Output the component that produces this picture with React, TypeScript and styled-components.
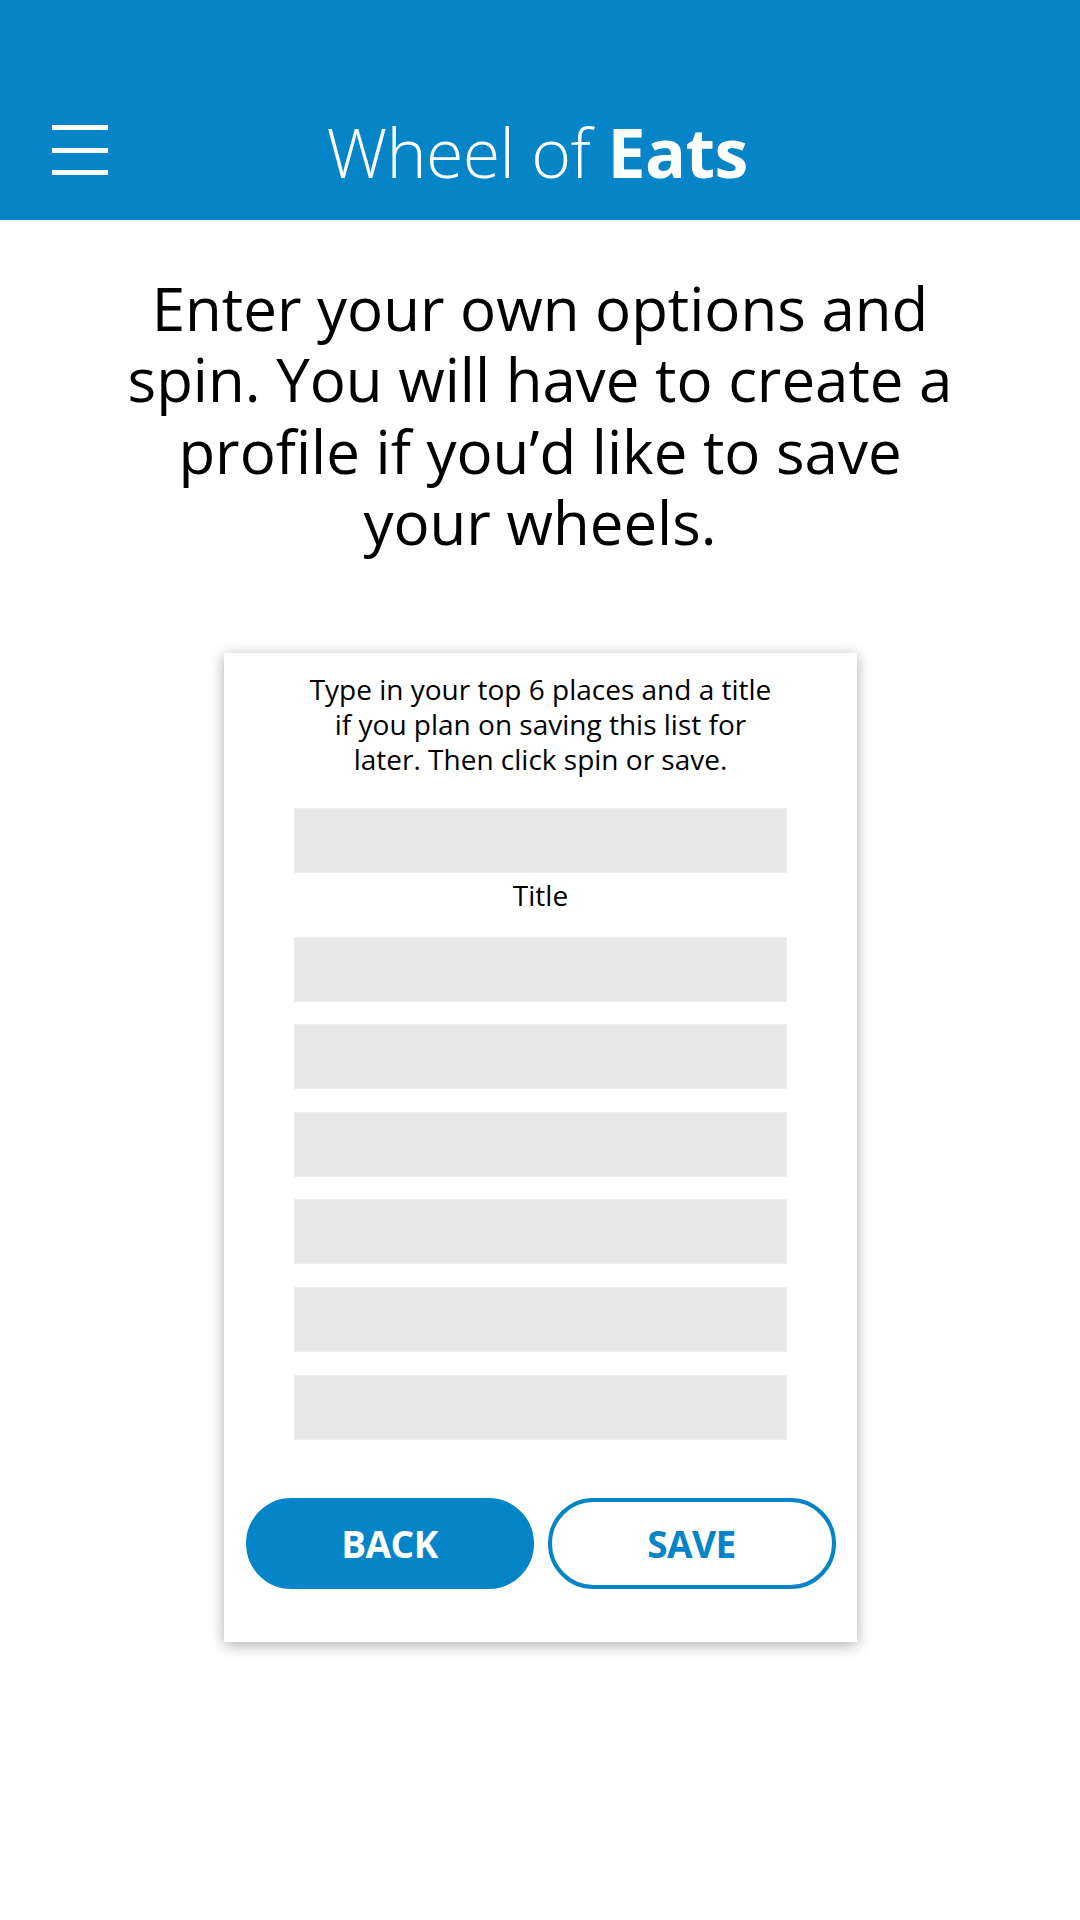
import React from "react";
import styled, { createGlobalStyle } from "styled-components";

const Global = createGlobalStyle`
  html, body { margin: 0; padding: 0; background: #fff; }
  body { font-family: "Open Sans", "Noto Sans", sans-serif; color: #000; }
  * { box-sizing: border-box; }
`;

const Page = styled.div`
  width: 1080px;
  min-height: 1920px;
  background: #fff;
  display: flex;
  flex-direction: column;
  align-items: center;
`;

const Header = styled.header`
  width: 100%;
  height: 220px;
  background: #0584c8;
  display: grid;
  grid-template-columns: 160px 1fr 160px;
  align-items: end;
`;

const MenuButton = styled.button`
  justify-self: start;
  margin: 0 0 45px 52px;
  width: 56px;
  height: 50px;
  padding: 0;
  border: none;
  background: transparent;
  display: flex;
  flex-direction: column;
  justify-content: space-between;
`;

const MenuBar = styled.span`
  display: block;
  width: 56px;
  height: 5px;
  background: #fff;
`;

const Brand = styled.h1`
  margin: 0 6px 34px 0;
  text-align: center;
  color: #fff;
  font-size: 68px;
  line-height: 68px;
  font-weight: 300;
  letter-spacing: -0.6px;
`;

const BrandBold = styled.span`
  font-weight: 700;
`;

const Intro = styled.p`
  margin: 53px 0 0;
  width: 845px;
  text-align: center;
  font-size: 60px;
  line-height: 71.4px;
  font-weight: 400;
`;

const Card = styled.section`
  margin-top: 94px;
  width: 633px;
  background: #fff;
  box-shadow: 0 3px 14px rgba(0, 0, 0, 0.33);
  padding: 19px 21px 53px 22px;
  display: flex;
  flex-direction: column;
  align-items: center;
`;

const Instructions = styled.p`
  margin: 0;
  width: 474px;
  text-align: center;
  font-size: 28px;
  line-height: 35px;
`;

const Field = styled.input<{ $gap: number }>`
  width: 493px;
  height: 65px;
  background: #e8e8e8;
  border: 1px solid #eeeeee;
  outline: none;
  margin-top: ${(p) => p.$gap}px;
  font-family: inherit;
  font-size: 28px;
  padding: 0 12px;
`;

const FieldLabel = styled.label`
  font-size: 28px;
  line-height: 35px;
  margin-top: 5.6px;
`;

const Buttons = styled.div`
  margin-top: 58px;
  width: 100%;
  display: flex;
  gap: 14px;
`;

const PillButton = styled.button<{ $filled?: boolean }>`
  flex: 1;
  height: 91px;
  border-radius: 46px;
  border: 4px solid #0584c8;
  background: ${(p) => (p.$filled ? "#0584c8" : "#fff")};
  color: ${(p) => (p.$filled ? "#fff" : "#0584c8")};
  font-family: "Open Sans", sans-serif;
  font-weight: 700;
  font-size: 37px;
  letter-spacing: -0.5px;
  padding: 0;
`;

export default function App() {
  const places = [0, 1, 2, 3, 4, 5];
  return (
    <>
      <Global />
      <Page>
        <Header>
          <MenuButton aria-label="Menu">
            <MenuBar />
            <MenuBar />
            <MenuBar />
          </MenuButton>
          <Brand>
            Wheel of <BrandBold>Eats</BrandBold>
          </Brand>
          <div />
        </Header>
        <Intro>
          Enter your own options and spin. You will have to create a profile if you’d like to save your wheels.
        </Intro>
        <Card>
          <Instructions>
            Type in your top 6 places and a title if you plan on saving this list for later. Then click spin or save.
          </Instructions>
          <Field $gap={31} id="title" />
          <FieldLabel htmlFor="title">Title</FieldLabel>
          {places.map((i) => (
            <Field key={i} $gap={i === 0 ? 23.4 : 22.6} />
          ))}
          <Buttons>
            <PillButton $filled>BACK</PillButton>
            <PillButton>SAVE</PillButton>
          </Buttons>
        </Card>
      </Page>
    </>
  );
}
